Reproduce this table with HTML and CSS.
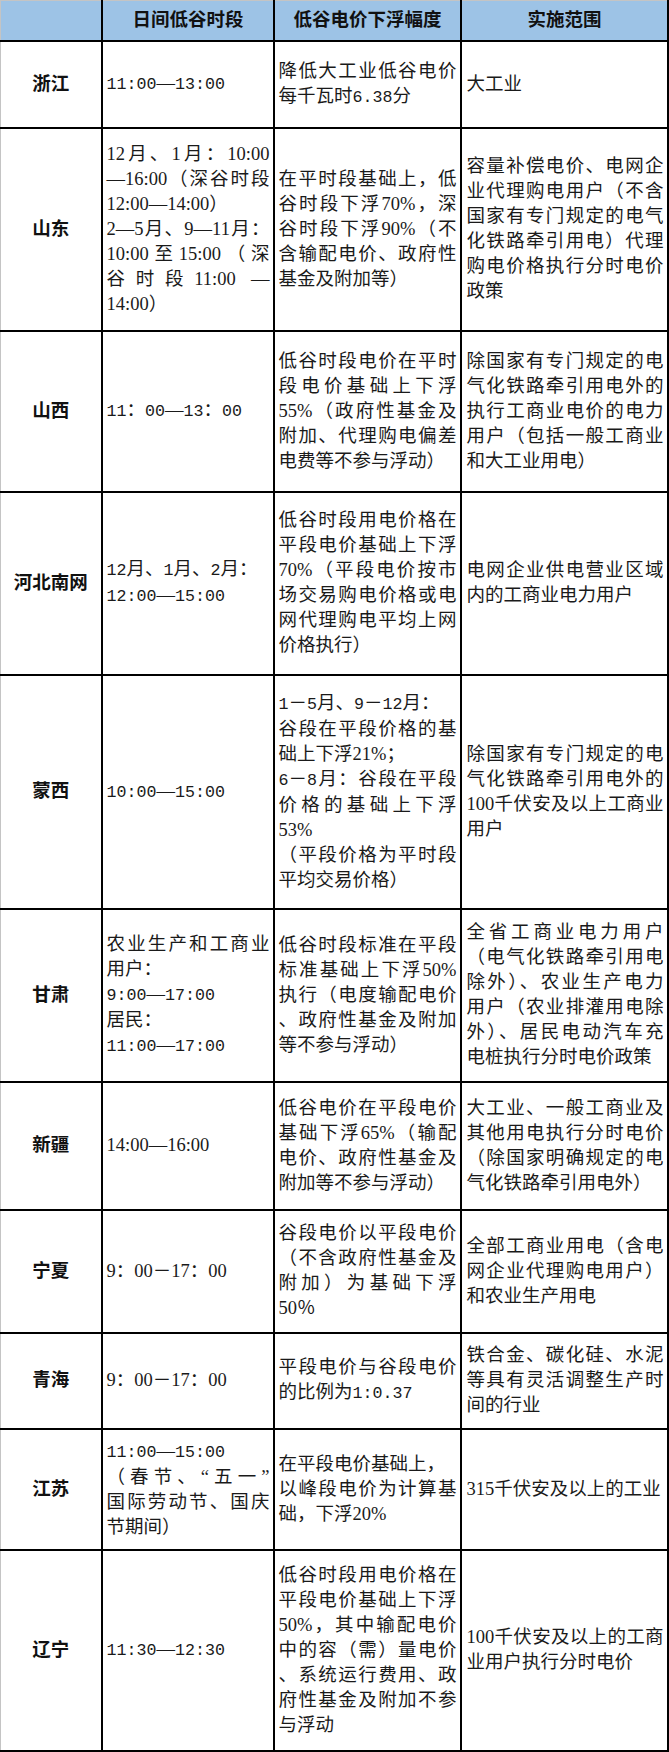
FILE: index.html
```html
<!DOCTYPE html>
<html lang="zh-CN">
<head>
<meta charset="utf-8">
<title>各地日间低谷电价政策</title>
<link rel="stylesheet" href="styles.css">
</head>
<body>
<table class="grid">
  <colgroup>
    <col class="c-prov">
    <col class="c-time">
    <col class="c-rate">
    <col class="c-scope">
  </colgroup>
  <thead>
    <tr class="r-head">
      <th></th>
      <th>日间低谷时段</th>
      <th>低谷电价下浮幅度</th>
      <th>实施范围</th>
    </tr>
  </thead>
  <tbody>
    <tr class="r-zj">
      <td class="prov">浙江</td>
      <td><span class="ln"><span class="s">11:00</span>—<span class="s">13:00</span></span></td>
      <td><span class="ln j">降低大工业低谷电价</span><span class="ln">每千瓦时<span class="s">6.38</span>分</span></td>
      <td><span class="ln">大工业</span></td>
    </tr>
    <tr class="r-sd">
      <td class="prov">山东</td>
      <td>
        <span class="ln j">12月、1月：10:00</span>
        <span class="ln j">—16:00（深谷时段</span>
        <span class="ln">12:00—14:00）</span>
        <span class="ln j">2—5月、9—11月：</span>
        <span class="ln j">10:00至15:00（深</span>
        <span class="ln j">谷时段11:00 —</span>
        <span class="ln">14:00）</span>
      </td>
      <td>
        <span class="ln j">在平时段基础上，低</span>
        <span class="ln j">谷时段下浮70%，深</span>
        <span class="ln j">谷时段下浮90%（不</span>
        <span class="ln j">含输配电价、政府性</span>
        <span class="ln">基金及附加等）</span>
      </td>
      <td>
        <span class="ln j">容量补偿电价、电网企</span>
        <span class="ln j">业代理购电用户（不含</span>
        <span class="ln j">国家有专门规定的电气</span>
        <span class="ln j">化铁路牵引用电）代理</span>
        <span class="ln j">购电价格执行分时电价</span>
        <span class="ln">政策</span>
      </td>
    </tr>
    <tr class="r-sx">
      <td class="prov">山西</td>
      <td><span class="ln"><span class="s">11</span>：<span class="s">00</span>—<span class="s">13</span>：<span class="s">00</span></span></td>
      <td>
        <span class="ln j">低谷时段电价在平时</span>
        <span class="ln j">段电价基础上下浮</span>
        <span class="ln j">55%（政府性基金及</span>
        <span class="ln j">附加、代理购电偏差</span>
        <span class="ln">电费等不参与浮动）</span>
      </td>
      <td>
        <span class="ln j">除国家有专门规定的电</span>
        <span class="ln j">气化铁路牵引用电外的</span>
        <span class="ln j">执行工商业电价的电力</span>
        <span class="ln j">用户（包括一般工商业</span>
        <span class="ln">和大工业用电）</span>
      </td>
    </tr>
    <tr class="r-hb">
      <td class="prov">河北南网</td>
      <td>
        <span class="ln"><span class="s">12</span>月、<span class="s">1</span>月、<span class="s">2</span>月：</span>
        <span class="ln"><span class="s">12:00</span>—<span class="s">15:00</span></span>
      </td>
      <td>
        <span class="ln j">低谷时段用电价格在</span>
        <span class="ln j">平段电价基础上下浮</span>
        <span class="ln j">70%（平段电价按市</span>
        <span class="ln j">场交易购电价格或电</span>
        <span class="ln j">网代理购电平均上网</span>
        <span class="ln">价格执行）</span>
      </td>
      <td>
        <span class="ln j">电网企业供电营业区域</span>
        <span class="ln">内的工商业电力用户</span>
      </td>
    </tr>
    <tr class="r-mx">
      <td class="prov">蒙西</td>
      <td><span class="ln"><span class="s">10:00</span>—<span class="s">15:00</span></span></td>
      <td>
        <span class="ln"><span class="s">1</span>－<span class="s">5</span>月、<span class="s">9</span>－<span class="s">12</span>月：</span>
        <span class="ln j">谷段在平段价格的基</span>
        <span class="ln">础上下浮21%；</span>
        <span class="ln j"><span class="s">6</span>－<span class="s">8</span>月：谷段在平段</span>
        <span class="ln j">价格的基础上下浮</span>
        <span class="ln">53%</span>
        <span class="ln j">（平段价格为平时段</span>
        <span class="ln">平均交易价格）</span>
      </td>
      <td>
        <span class="ln j">除国家有专门规定的电</span>
        <span class="ln j">气化铁路牵引用电外的</span>
        <span class="ln j">100千伏安及以上工商业</span>
        <span class="ln">用户</span>
      </td>
    </tr>
    <tr class="r-gs">
      <td class="prov">甘肃</td>
      <td>
        <span class="ln j">农业生产和工商业</span>
        <span class="ln">用户：</span>
        <span class="ln"><span class="s">9:00</span>—<span class="s">17:00</span></span>
        <span class="ln">居民：</span>
        <span class="ln"><span class="s">11:00</span>—<span class="s">17:00</span></span>
      </td>
      <td>
        <span class="ln j">低谷时段标准在平段</span>
        <span class="ln j">标准基础上下浮50%</span>
        <span class="ln j">执行（电度输配电价</span>
        <span class="ln j">、政府性基金及附加</span>
        <span class="ln">等不参与浮动）</span>
      </td>
      <td>
        <span class="ln j">全省工商业电力用户</span>
        <span class="ln j">（电气化铁路牵引用电</span>
        <span class="ln j">除外）、农业生产电力</span>
        <span class="ln j">用户（农业排灌用电除</span>
        <span class="ln j">外）、居民电动汽车充</span>
        <span class="ln">电桩执行分时电价政策</span>
      </td>
    </tr>
    <tr class="r-xj">
      <td class="prov">新疆</td>
      <td><span class="ln">14:00—16:00</span></td>
      <td>
        <span class="ln j">低谷电价在平段电价</span>
        <span class="ln j">基础下浮65%（输配</span>
        <span class="ln j">电价、政府性基金及</span>
        <span class="ln">附加等不参与浮动）</span>
      </td>
      <td>
        <span class="ln j">大工业、一般工商业及</span>
        <span class="ln j">其他用电执行分时电价</span>
        <span class="ln j">（除国家明确规定的电</span>
        <span class="ln">气化铁路牵引用电外）</span>
      </td>
    </tr>
    <tr class="r-nx">
      <td class="prov">宁夏</td>
      <td><span class="ln">9：00－17：00</span></td>
      <td>
        <span class="ln j">谷段电价以平段电价</span>
        <span class="ln j">（不含政府性基金及</span>
        <span class="ln j">附加）为基础下浮</span>
        <span class="ln">50％</span>
      </td>
      <td>
        <span class="ln j">全部工商业用电（含电</span>
        <span class="ln j">网企业代理购电用户）</span>
        <span class="ln">和农业生产用电</span>
      </td>
    </tr>
    <tr class="r-qh">
      <td class="prov">青海</td>
      <td><span class="ln">9：00－17：00</span></td>
      <td>
        <span class="ln j">平段电价与谷段电价</span>
        <span class="ln">的比例为<span class="s">1:0.37</span></span>
      </td>
      <td>
        <span class="ln j">铁合金、碳化硅、水泥</span>
        <span class="ln j">等具有灵活调整生产时</span>
        <span class="ln">间的行业</span>
      </td>
    </tr>
    <tr class="r-js">
      <td class="prov">江苏</td>
      <td>
        <span class="ln"><span class="s">11:00</span>—<span class="s">15:00</span></span>
        <span class="ln j">（春节、“五一”</span>
        <span class="ln j">国际劳动节、国庆</span>
        <span class="ln">节期间）</span>
      </td>
      <td>
        <span class="ln">在平段电价基础上，</span>
        <span class="ln j">以峰段电价为计算基</span>
        <span class="ln">础，下浮20%</span>
      </td>
      <td><span class="ln">315千伏安及以上的工业</span></td>
    </tr>
    <tr class="r-ln">
      <td class="prov">辽宁</td>
      <td><span class="ln"><span class="s">11:30</span>—<span class="s">12:30</span></span></td>
      <td>
        <span class="ln j">低谷时段用电价格在</span>
        <span class="ln j">平段电价基础上下浮</span>
        <span class="ln j">50%，其中输配电价</span>
        <span class="ln j">中的容（需）量电价</span>
        <span class="ln j">、系统运行费用、政</span>
        <span class="ln j">府性基金及附加不参</span>
        <span class="ln">与浮动</span>
      </td>
      <td>
        <span class="ln j">100千伏安及以上的工商</span>
        <span class="ln">业用户执行分时电价</span>
      </td>
    </tr>
  </tbody>
</table>
</body>
</html>
```

FILE: styles.css
```css
html, body {
  margin: 0;
  padding: 0;
  background: #ffffff;
}

.grid {
  border-collapse: collapse;
  table-layout: fixed;
  width: 668px;
  font-family: "Liberation Serif", "Noto Sans CJK SC", serif;
  font-size: 18.5px;
  line-height: 25px;
  color: #1a1a1a;
}

.c-prov { width: 101px; }
.c-time { width: 172px; }
.c-rate { width: 187px; }
.c-scope { width: 207px; }

.grid th,
.grid td {
  border: 2px solid #000;
  padding: 0 3px 0 4px;
  vertical-align: middle;
  text-align: left;
  overflow: hidden;
  white-space: nowrap;
}

.grid th {
  background: #9dc3e6;
  font-weight: 700;
  text-align: center;
  color: #111;
  border-top: 1px solid #c4c4c4;
}

.grid th:first-child,
.grid td:first-child {
  border-left: 1px solid #c4c4c4;
}

.grid td:nth-child(4) {
  padding-left: 5px;
}

.grid .prov {
  font-weight: 700;
  text-align: center;
  color: #111;
  padding: 0;
}

.ln {
  display: block;
}

.j {
  text-align: justify;
  text-align-last: justify;
}

.s {
  font-family: "Liberation Mono", "Noto Sans CJK SC", monospace;
  font-size: 0.9em;
}

.r-head { height: 40px; }
.r-zj { height: 87px; }
.r-sd { height: 203px; }
.r-sx { height: 161px; }
.r-hb { height: 183px; }
.r-mx { height: 234px; }
.r-gs { height: 173px; }
.r-xj { height: 128px; }
.r-nx { height: 123px; }
.r-qh { height: 96px; }
.r-js { height: 121px; }
.r-ln { height: 201px; }
```
